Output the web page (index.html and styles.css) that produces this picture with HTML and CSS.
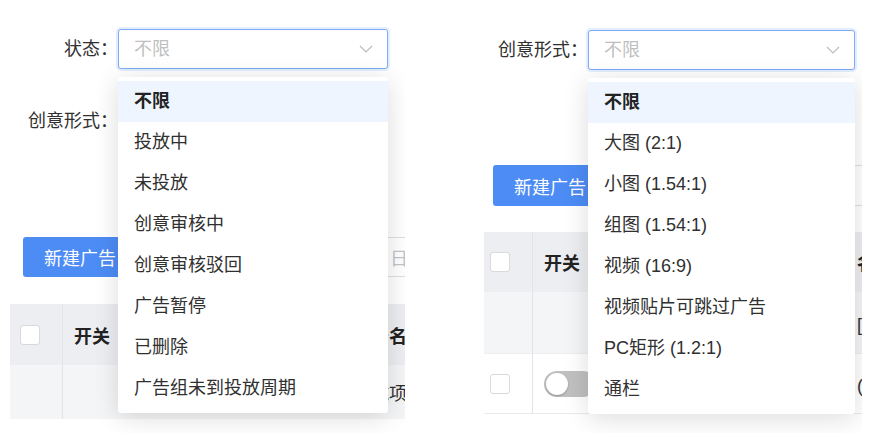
FILE: index.html
```html
<!DOCTYPE html>
<html lang="zh-CN">
<head>
<meta charset="utf-8">
<title>筛选</title>
<link rel="stylesheet" href="styles.css">
</head>
<body>
<div class="shots">
  <section class="shot">
    <div class="page page-a">
      <div class="form-row">
        <label class="label label-a">状态：</label>
        <div class="select-wrap">
          <div class="select select-a open">
            <span class="ph">不限</span>
            <svg class="chev" width="14" height="8" viewBox="0 0 14 8"><path d="M1 1 L7 7 L13 1" fill="none" stroke="#bcbcbc" stroke-width="1.2"/></svg>
          </div>
          <ul class="dropdown">
            <li class="item selected">不限</li>
            <li class="item">投放中</li>
            <li class="item">未投放</li>
            <li class="item">创意审核中</li>
            <li class="item">创意审核驳回</li>
            <li class="item">广告暂停</li>
            <li class="item">已删除</li>
            <li class="item">广告组未到投放周期</li>
          </ul>
        </div>
      </div>
      <div class="form-row row-second">
        <label class="label label-a">创意形式：</label>
        <div class="select select-a"><span class="ph">不限</span></div>
      </div>
      <div class="actions actions-a">
        <button class="btn">新建广告</button>
        <div class="date date-a">日期</div>
      </div>
      <div class="table table-a">
        <div class="cell head c1"><span class="check"></span></div>
        <div class="cell head c2 bold">开关</div>
        <div class="cell head c3 bold">广告名称</div>
        <div class="cell body c1"></div>
        <div class="cell body c2"></div>
        <div class="cell body c3">测试项目</div>
      </div>
    </div>
  </section>

  <section class="shot">
    <div class="page page-b">
      <div class="form-row">
        <label class="label label-b">创意形式：</label>
        <div class="select-wrap">
          <div class="select select-b open">
            <span class="ph">不限</span>
            <svg class="chev" width="14" height="8" viewBox="0 0 14 8"><path d="M1 1 L7 7 L13 1" fill="none" stroke="#bcbcbc" stroke-width="1.2"/></svg>
          </div>
          <ul class="dropdown">
            <li class="item selected">不限</li>
            <li class="item">大图 (2:1)</li>
            <li class="item">小图 (1.54:1)</li>
            <li class="item">组图 (1.54:1)</li>
            <li class="item">视频 (16:9)</li>
            <li class="item">视频贴片可跳过广告</li>
            <li class="item">PC矩形 (1.2:1)</li>
            <li class="item">通栏</li>
          </ul>
        </div>
      </div>
      <div class="actions actions-b">
        <button class="btn">新建广告</button>
        <div class="date date-b">开始日期</div>
      </div>
      <div class="table table-b">
        <div class="cell head c1"><span class="check"></span></div>
        <div class="cell head c2 bold">开关</div>
        <div class="cell head c3 bold">名称</div>
        <div class="cell body c1"></div>
        <div class="cell body c2"></div>
        <div class="cell body c3">[测试]</div>
        <div class="cell white c1"><span class="check"></span></div>
        <div class="cell white c2"><span class="switch"><span class="knob"></span></span></div>
        <div class="cell white c3">(默认)</div>
      </div>
    </div>
  </section>
</div>
</body>
</html>
```

FILE: styles.css
```css
* { box-sizing: border-box; }
html, body { margin: 0; padding: 0; background: #fff; }
body {
  font-family: "Liberation Sans", "Noto Sans CJK SC", sans-serif;
  font-size: 18px;
  color: #303030;
  width: 872px;
  height: 433px;
  overflow: hidden;
}
.shots { display: flex; width: 872px; height: 433px; }
.shot { width: 436px; height: 433px; position: relative; }

.page { overflow: hidden; position: relative; }
.page-a { margin-left: 10px; width: 395px; height: 433px; padding-top: 29px; }
.page-b { margin-left: 48px; width: 378px; height: 433px; padding-top: 30px; }

.form-row { display: flex; align-items: center; height: 40px; }
.row-second { margin-top: 32px; }
.label { text-align: right; white-space: nowrap; line-height: 40px; color: #303030; }
.label-a { width: 108px; }
.label-b { width: 104px; }

.select-wrap { position: relative; }
.select {
  height: 40px;
  border: 1px solid #dcdfe6;
  border-radius: 3px;
  display: flex;
  align-items: center;
  padding-left: 15px;
  padding-right: 14px;
  background: #fff;
}
.select-a { width: 270px; }
.select-b { width: 267px; }
.select.open {
  border-color: #7fa9f6;
  box-shadow: 0 0 0 2px rgba(77, 140, 245, 0.16);
}
.ph { color: #bfbfbf; flex: 1; line-height: 38px; }
.chev { display: block; }

.dropdown {
  position: absolute;
  z-index: 10;
  left: 0;
  right: 0;
  top: 48px;
  margin: 0;
  padding: 4px 0;
  list-style: none;
  background: #fff;
  border-radius: 3px;
  box-shadow: 0 4px 26px rgba(0, 0, 0, 0.14);
}
.item {
  height: 41px;
  line-height: 41px;
  padding-left: 16px;
  color: #303030;
  white-space: nowrap;
}
.item.selected { background: #eef5fe; font-weight: 700; color: #222; }

.actions { display: flex; align-items: center; height: 40px; }
.actions-a { margin-top: 96px; padding-left: 13px; }
.actions-b { margin-top: 95px; padding-left: 9px; height: 41px; }
.btn {
  width: 112px;
  height: 100%;
  border: 0;
  border-radius: 3px;
  background: #4d8cf5;
  color: #fff;
  font: inherit;
  text-align: left;
  padding-left: 21px;
  flex: none;
}
.date {
  height: 100%;
  flex: none;
  border: 1px solid #dcdfe6;
  border-radius: 3px;
  color: #c0c4cc;
  display: flex;
  align-items: center;
  width: 300px;
}
.date-a { margin-left: 243px; padding-left: 11px; }
.date-b { margin-left: 15px; padding-left: 15px; }

.table { display: grid; }
.table-a { margin-top: 27px; grid-template-columns: 52px 291px 1fr; grid-template-rows: 61px 54px; }
.table-b { margin-top: 26px; grid-template-columns: 48px 324px 1fr; grid-template-rows: 60px 61px 60px; border-bottom: 1px solid #e8eaee; }
.cell { display: flex; align-items: center; white-space: nowrap; }
.head { background: #eceef1; }
.body { background: #f4f5f7; }
.white { background: #fff; border-top: 1px solid #eceef1; }
.bold { font-weight: 700; color: #222; }
.c2 { border-left: 1px solid #e2e4e8; }
.table-a .c1 { padding-left: 10px; }
.table-a .c2 { padding-left: 11px; }
.table-b .c1 { padding-left: 6px; }
.table-b .c2 { padding-left: 11px; }
.table-b .c3 { padding-left: 1px; }
.check {
  width: 20px;
  height: 20px;
  border: 1px solid #d9d9d9;
  border-radius: 3px;
  background: #fff;
  display: block;
}
.switch {
  width: 52px;
  height: 26px;
  border-radius: 13px;
  background: #c0c0c0;
  display: flex;
  align-items: center;
  padding-left: 2px;
}
.knob {
  width: 22px;
  height: 22px;
  border-radius: 50%;
  background: #fff;
  box-shadow: 0 1px 2px rgba(0, 0, 0, 0.25);
  display: block;
}
```
